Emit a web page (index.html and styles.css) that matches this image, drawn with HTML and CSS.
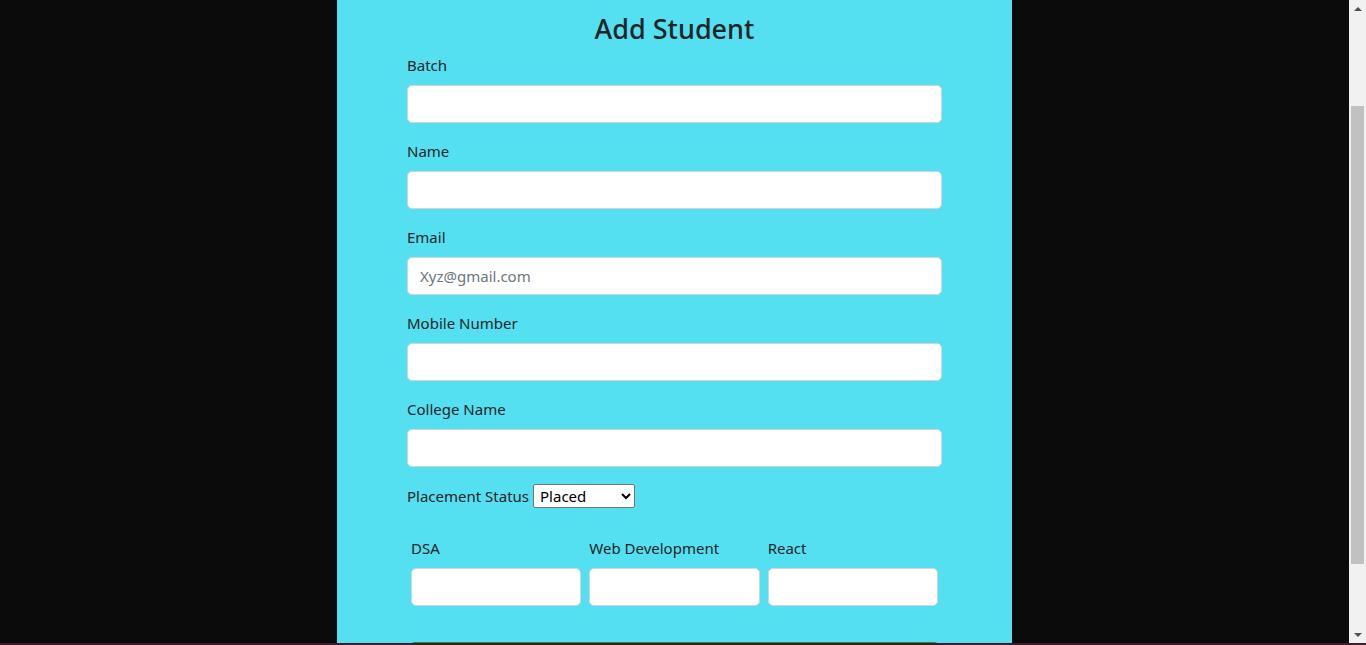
FILE: index.html
```html
<!DOCTYPE html>
<html lang="en">
<head>
<meta charset="utf-8">
<title>Add Student</title>
<link rel="stylesheet" href="styles.css">
</head>
<body>
<div class="screen">
  <div class="viewport">
    <div class="page">
      <div class="panel">
        <h2 class="title">Add Student</h2>
        <form class="form">
          <div class="group">
            <label class="label">Batch</label>
            <input class="control" type="text">
          </div>
          <div class="group">
            <label class="label">Name</label>
            <input class="control" type="text">
          </div>
          <div class="group">
            <label class="label">Email</label>
            <input class="control" type="email" placeholder="Xyz@gmail.com">
          </div>
          <div class="group">
            <label class="label">Mobile Number</label>
            <input class="control" type="text">
          </div>
          <div class="group">
            <label class="label">College Name</label>
            <input class="control" type="text">
          </div>
          <div class="status-row">
            <span class="status-label">Placement Status</span>
            <select class="status-select">
              <option>Placed</option>
              <option>Not Placed</option>
            </select>
          </div>
          <div class="scores">
            <div class="col">
              <label class="label">DSA</label>
              <input class="control" type="text">
            </div>
            <div class="col">
              <label class="label">Web Development</label>
              <input class="control" type="text">
            </div>
            <div class="col">
              <label class="label">React</label>
              <input class="control" type="text">
            </div>
          </div>
          <button class="submit" type="button" aria-label="Submit"></button>
        </form>
      </div>
    </div>
    <div class="scrollbar">
      <div class="sb-btn"><span class="arrow-up"></span></div>
      <div class="sb-track"><div class="sb-thumb"></div></div>
      <div class="sb-btn"><span class="arrow-down"></span></div>
    </div>
  </div>
  <div class="bottom-bar"></div>
</div>
</body>
</html>
```

FILE: styles.css
```css
* { box-sizing: border-box; }

html, body {
  margin: 0;
  padding: 0;
  height: 645px;
  overflow: hidden;
  background: #0b0b0b;
  font-family: "Noto Sans", "Open Sans", sans-serif;
  color: #212529;
}

.screen {
  display: flex;
  flex-direction: column;
  height: 645px;
}

.viewport {
  flex: 1;
  min-height: 0;
  display: flex;
}

.page {
  flex: 1;
  display: flex;
  justify-content: center;
  overflow: hidden;
}

.panel {
  width: 675px;
  background: #54e0f0;
  padding: 12px 70px 0;
}

.title {
  margin: 0 0 7px;
  text-align: center;
  font-size: 27px;
  line-height: 34px;
  font-weight: 500;
  color: #212529;
}

.form {
  display: flex;
  flex-direction: column;
}

.group {
  margin-bottom: 16px;
}

.label {
  display: block;
  font-size: 15px;
  line-height: 24px;
  margin-bottom: 8px;
  color: #212529;
}

.control {
  display: block;
  width: 100%;
  height: 38px;
  padding: 6px 12px;
  font-family: inherit;
  font-size: 15px;
  color: #212529;
  background: #fff;
  border: 1px solid #ced4da;
  border-radius: 5px;
  outline: none;
}

.control::placeholder {
  color: #6c757d;
}

.status-row {
  display: flex;
  align-items: center;
  height: 26px;
  margin-bottom: 27px;
}

.status-label {
  font-size: 15px;
  line-height: 24px;
  margin-right: 4px;
}

.status-select {
  width: 102px;
  height: 24px;
  font-family: inherit;
  font-size: 15px;
  color: #000;
  background: #fff;
  border: 1px solid #767676;
  border-radius: 2px;
  padding: 0 2px;
}

.scores {
  display: grid;
  grid-template-columns: 1fr 1fr 1fr;
}

.col {
  padding: 0 4px;
}

.submit {
  margin: 36px 2px 0;
  height: 38px;
  border: 1px solid #1f8f2a;
  border-radius: 6px;
  background: #1f8f2a;
  padding: 0;
}

.scrollbar {
  width: 17px;
  background: #f1f1f1;
  display: flex;
  flex-direction: column;
}

.sb-btn {
  height: 17px;
  display: flex;
  align-items: center;
  justify-content: center;
}

.arrow-up {
  width: 0;
  height: 0;
  border-left: 4px solid transparent;
  border-right: 4px solid transparent;
  border-bottom: 4px solid #505050;
}

.arrow-down {
  width: 0;
  height: 0;
  border-left: 4px solid transparent;
  border-right: 4px solid transparent;
  border-top: 4px solid #505050;
}

.sb-track {
  flex: 1;
  padding: 89px 2px 0;
}

.sb-thumb {
  height: 458px;
  background: #c1c1c1;
}

.bottom-bar {
  height: 2px;
  background: #43192a;
}
```
